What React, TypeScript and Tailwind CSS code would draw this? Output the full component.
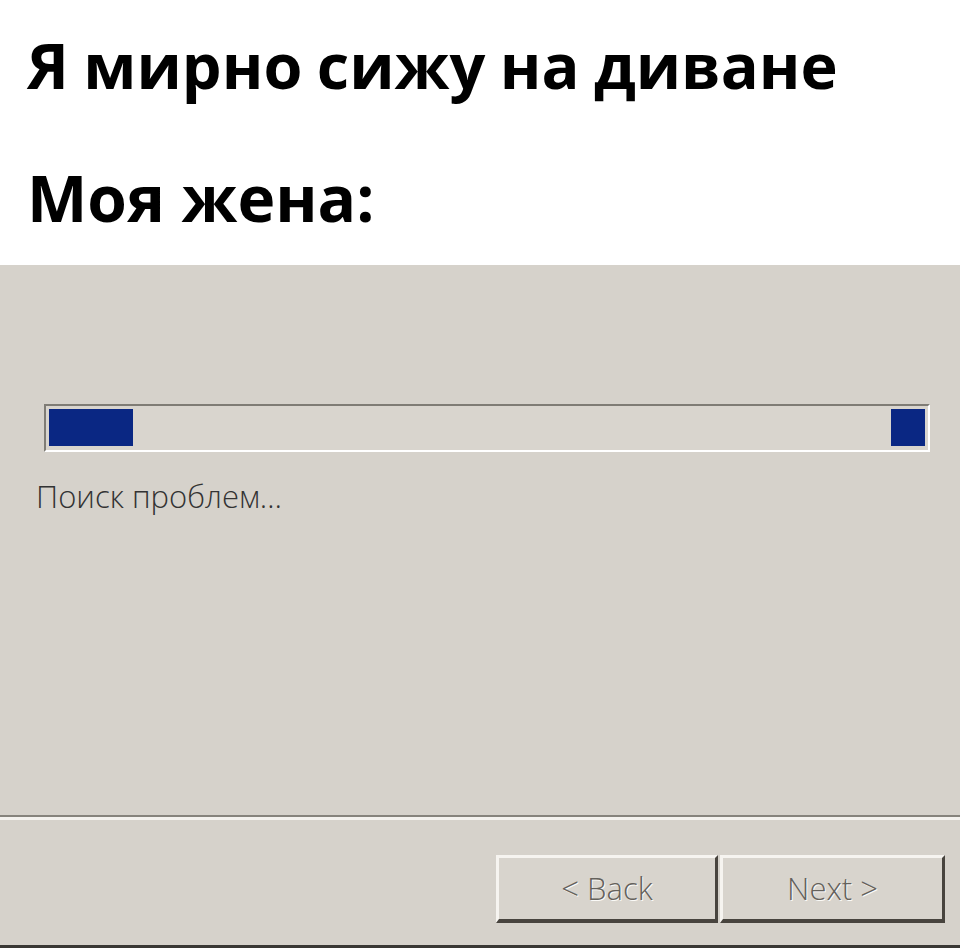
import React from "react";

// Classic wizard page: caption on top, progress strip, status, footer buttons
function WizardButton({ label }: { label: string }) {
  return (
    <div className="flex h-[68px] items-center justify-center border-t-[3px] border-l-[3px] border-b-[4px] border-r-[3px] border-t-[#f6f4f0] border-l-[#f6f4f0] border-b-[#48443e] border-r-[#48443e] bg-[#d8d4cd]">
      <span className="font-['Open_Sans',sans-serif] text-[31px] font-light text-[#64615b] [text-shadow:1px_1px_0_#fbfaf7]">
        {label}
      </span>
    </div>
  );
}

export default function App() {
  return (
    <div className="flex h-[948px] w-[960px] flex-col overflow-hidden bg-white">
      <div className="flex h-[265px] flex-col gap-[45px] pl-[27px] pt-[21px] font-['Open_Sans',sans-serif] font-bold leading-[88px] text-black">
        <div className="text-[63px] [word-spacing:-2px]">Я мирно сижу на диване</div>
        <div className="text-[64px]">Моя жена:</div>
      </div>

      <div className="flex flex-1 flex-col bg-[#d6d2cb]">
        <div className="pl-[44px] pr-[30px] pt-[139px]">
          <div className="flex h-[48px] justify-between border-t-2 border-l-2 border-b-2 border-r-2 border-t-[#7f7c75] border-l-[#7f7c75] border-b-white border-r-white bg-[#d9d5ce] p-[3px] pb-[4px]">
            <div className="w-[84px] bg-[#0a2783]" />
            <div className="w-[34px] bg-[#0a2783]" />
          </div>
        </div>

        <div className="pl-[36px] pt-[24px] font-['Open_Sans',sans-serif] text-[31px] font-light leading-[40px] text-[#333]">
          Поиск проблем…
        </div>

        <div className="flex-1" />

        <div className="h-[2px] bg-[#86837c]" />
        <div className="h-[3px] bg-[#f4f2ee]" />

        <div className="grid grid-cols-[222px_225px] gap-[2px] pl-[496px] pt-[35px]">
          <WizardButton label="< Back" />
          <WizardButton label="Next >" />
        </div>

        <div className="h-[22px]" />
        <div className="h-[3px] bg-[#3a3834]" />
      </div>
    </div>
  );
}
